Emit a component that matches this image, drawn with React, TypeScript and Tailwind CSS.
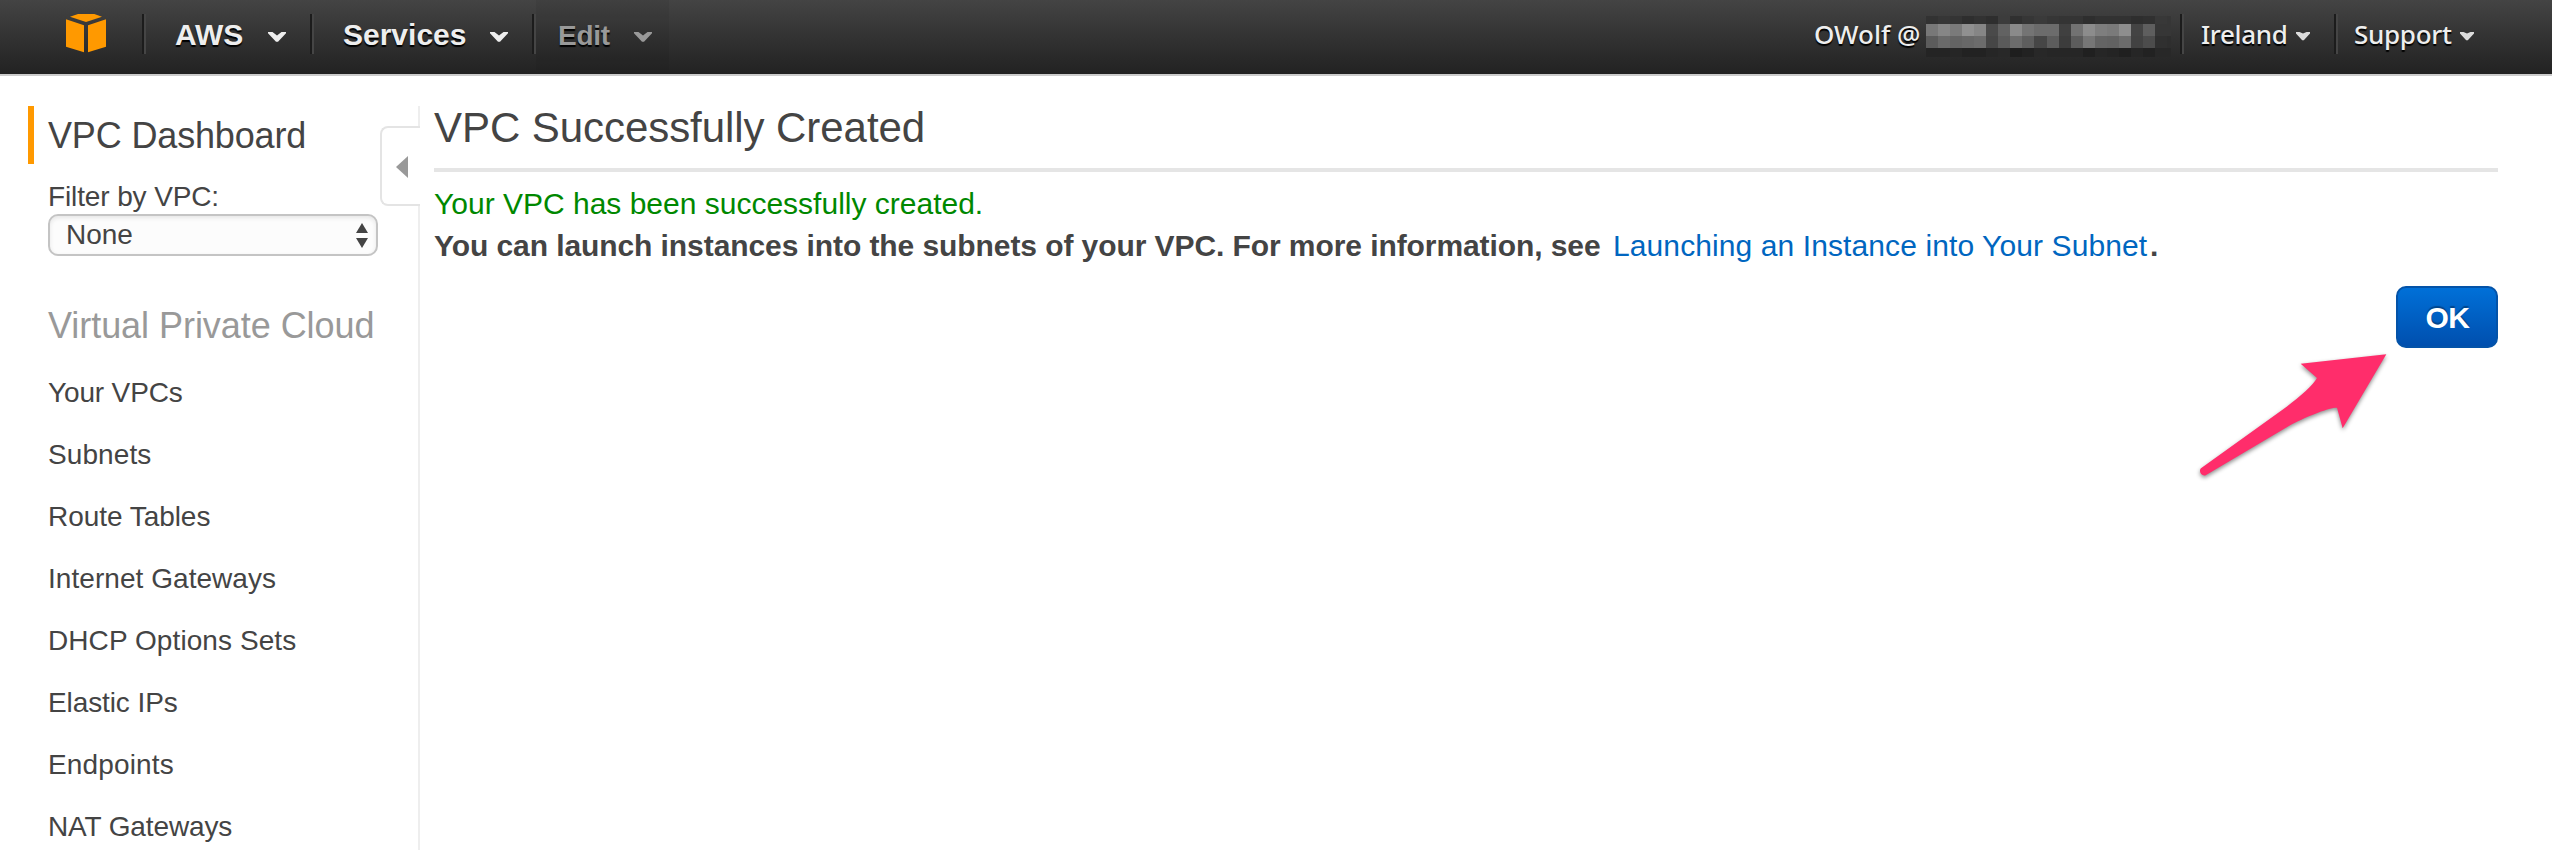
import { Fragment } from "react";

const sidebarLinks = [
  { label: "Your VPCs", tracking: "tracking-[-0.15px]" },
  { label: "Subnets", tracking: "tracking-[0.1px]" },
  { label: "Route Tables", tracking: "tracking-[-0.05px]" },
  { label: "Internet Gateways", tracking: "tracking-[0.05px]" },
  { label: "DHCP Options Sets", tracking: "tracking-[0.08px]" },
  { label: "Elastic IPs", tracking: "tracking-[-0.1px]" },
  { label: "Endpoints", tracking: "tracking-[0.15px]" },
  { label: "NAT Gateways", tracking: "tracking-[-0.12px]" },
];

// Brightness of each cell of the masked account number, top row to bottom row.
const maskRows = [
  { y: 0, h: 8, v: [50, 54, 52, 46, 50, 46, 60, 48, 54, 58, 54, 52, 52, 46, 50, 50, 50, 46, 48, 56, 54] },
  { y: 8, h: 12, v: [120, 134, 122, 144, 134, 74, 98, 138, 116, 108, 108, 64, 114, 140, 126, 122, 142, 68, 94, 54, 54] },
  { y: 20, h: 12, v: [92, 106, 100, 104, 108, 70, 90, 108, 94, 70, 92, 60, 92, 118, 100, 98, 108, 66, 76, 48, 46] },
  { y: 32, h: 9, v: [36, 36, 38, 34, 34, 38, 40, 30, 34, 40, 38, 38, 38, 32, 38, 36, 32, 38, 34, 40, 40] },
];

function Divider() {
  return <span className="h-10 w-1 shrink-0 border-l-2 border-r-2 border-l-[#1c1c1c] border-r-[#454545]" />;
}

function Chevron({ className }: { className: string }) {
  return (
    <svg viewBox="0 0 18 12" className={`h-3 w-[18px] shrink-0 ${className}`} fill="currentColor">
      <path d="M0 0H4.5L9 3.6L13.5 0H18V1.2L10 9.8H8L0 1.2Z" />
    </svg>
  );
}

function Caret({ className }: { className: string }) {
  return (
    <svg viewBox="0 0 14 10" className={`h-2.5 w-3.5 shrink-0 text-[#dcdcdc] ${className}`} fill="currentColor">
      <path d="M0 0H3.5L7 1.6L10.5 0H14V1.4L7.8 8.2H6.2L0 1.4Z" />
    </svg>
  );
}

function Header() {
  return (
    <header className="flex h-[76px] items-start border-b-2 border-[#ccc] bg-linear-to-b from-[#444] to-[#222] pt-3.5 text-[#eee] [text-shadow:0_2px_1px_#000]">
      <svg viewBox="0 0 120 117" className="ml-[66px] h-[39px] w-10 shrink-0" fill="#ff9900">
        <path d="M36 0H85L108 8L60 24L12 8Z" />
        <path d="M0 16L54 34V115L0 98Z" />
        <path d="M120 16L66 34V115L120 98Z" />
      </svg>
      <div className="ml-9 flex">
        <Divider />
        <div className="flex w-[164px] pt-px pl-[29px] text-[30px] leading-10 font-bold">
          <span className="w-[93px]">AWS</span>
          <Chevron className="mt-[17px]" />
        </div>
        <Divider />
        <div className="flex w-[218px] pt-px pl-[29px] text-[30px] leading-10 font-bold">
          <span className="w-[147px]">Services</span>
          <Chevron className="mt-[17px]" />
        </div>
        <Divider />
        <div className="-mt-3.5 flex h-[70px] w-[133px] bg-black/5 pt-4 pl-[22px] text-[28px] leading-10 font-bold text-[#999]">
          <span className="w-[76px] tracking-[-0.3px]">Edit</span>
          <Chevron className="mt-4" />
        </div>
      </div>
      <div className="ml-auto flex font-['Noto_Sans',sans-serif] text-[26px] leading-10 font-medium">
        <div className="flex w-[366px]">
          <span className="w-[112px] whitespace-nowrap">OWolf @</span>
          <svg viewBox="0 0 245 41" className="mt-0.5 h-[41px] w-[245px]" shapeRendering="crispEdges">
            {maskRows.map((row) => (
              <Fragment key={row.y}>
                {row.v.map((v, i) => (
                  <rect key={i} x={i * 12.05} y={row.y} width={i === 20 ? 4 : 12.2} height={row.h} fill={`rgb(${v},${v},${v})`} />
                ))}
              </Fragment>
            ))}
          </svg>
        </div>
        <Divider />
        <div className="flex w-[150px] pl-[17px]">
          <span className="w-[95px] tracking-[-0.35px]">Ireland</span>
          <Caret className="mt-[18px]" />
        </div>
        <Divider />
        <div className="flex w-[214px] pl-4">
          <span className="w-[106px] tracking-[-0.3px]">Support</span>
          <Caret className="mt-[18px]" />
        </div>
      </div>
    </header>
  );
}

function Sidebar() {
  return (
    <aside className="relative w-[420px] shrink-0 pt-[30px]">
      <div className="ml-7 flex h-[58px] items-center border-l-[6px] border-[#ff9900] pl-3.5 text-[36px] leading-[58px] tracking-[-0.15px]">
        <span className="mt-0.5">VPC Dashboard</span>
      </div>
      <div className="mt-[17px] ml-12 text-[28px] leading-8 tracking-[-0.12px]">Filter by VPC:</div>
      <div className="mt-px ml-12 flex h-[42px] w-[330px] items-center justify-between rounded-[10px] border-2 border-[#c4c4c4] bg-[#fcfcfc] pr-2 pl-4 text-[28px] leading-[38px] shadow-[inset_0_2px_4px_#e6e6e6]">
        <span className="-mt-px">None</span>
        <svg viewBox="0 0 12 25" className="h-[25px] w-3" fill="#444">
          <path d="M6 0L12 10H0Z" />
          <path d="M6 25L12 15H0Z" />
        </svg>
      </div>
      <h2 className="mt-[50px] ml-12 text-[36px] leading-10 tracking-[-0.05px] whitespace-nowrap text-[#999]">
        Virtual Private Cloud
      </h2>
      <nav className="mt-4 ml-12 flex flex-col text-[28px] leading-[62px]">
        {sidebarLinks.map(({ label, tracking }) => (
          <a key={label} className={`block h-[62px] ${tracking}`}>
            {label}
          </a>
        ))}
      </nav>
      <div className="absolute top-[30px] right-0 h-5 w-0.5 bg-[#eee]" />
      <div className="absolute top-[130px] right-0 bottom-0 w-0.5 bg-[#eee]" />
      <div className="absolute top-[50px] right-0 flex h-20 w-10 items-center rounded-l-[8px] border-2 border-r-0 border-[#e4e4e4] pl-3.5">
        <svg viewBox="0 0 12 22" className="mt-0.5 h-[22px] w-3" fill="#999">
          <path d="M12 0V22L0 11Z" />
        </svg>
      </div>
    </aside>
  );
}

export default function App() {
  return (
    <div className="flex h-[850px] w-[2552px] flex-col overflow-hidden bg-white font-['Liberation_Sans',sans-serif] text-[#444]">
      <Header />
      <div className="flex min-h-0 flex-1">
        <Sidebar />
        <main className="relative flex w-[2078px] flex-col pl-3.5">
          <h1 className="mt-[27px] h-[65px] text-[42px] leading-[50px] tracking-[-0.06px]">VPC Successfully Created</h1>
          <div className="h-1 bg-[#e5e5e5]" />
          <p className="mt-[11px] text-[30px] leading-[42px] text-[#008800]">Your VPC has been successfully created.</p>
          <p className="flex text-[30px] leading-[42px] font-bold whitespace-nowrap">
            <span className="w-[1179px] tracking-[-0.08px]">
              You can launch instances into the subnets of your VPC. For more information, see
            </span>
            <a className="w-[537px] font-normal tracking-[0.1px] text-[#0066c0]">Launching an Instance into Your Subnet</a>
            <span>.</span>
          </p>
          <button className="mt-[19px] h-[62px] w-[102px] self-end rounded-[10px] border-2 border-[#0453a8] bg-linear-to-b from-[#0070d8] to-[#004fae] pt-px pl-px text-[30px] leading-[57px] font-bold tracking-[-0.5px] text-white [text-shadow:0_-2px_1px_#00458c]">
            OK
          </button>
          <svg
            viewBox="0 0 600 400"
            className="absolute top-[274px] left-[1770px] h-[133.33px] w-[200px] drop-shadow-[0_2px_2px_rgba(0,0,0,0.45)]"
            fill="#ff2d6b"
          >
            <path d="M589 13L458 235L441 173C420 172 360 195 303 224L47 376C34 380 24 362 34 354L290 170C330 140 370 105 381 84L332 41Z" />
          </svg>
        </main>
      </div>
    </div>
  );
}
